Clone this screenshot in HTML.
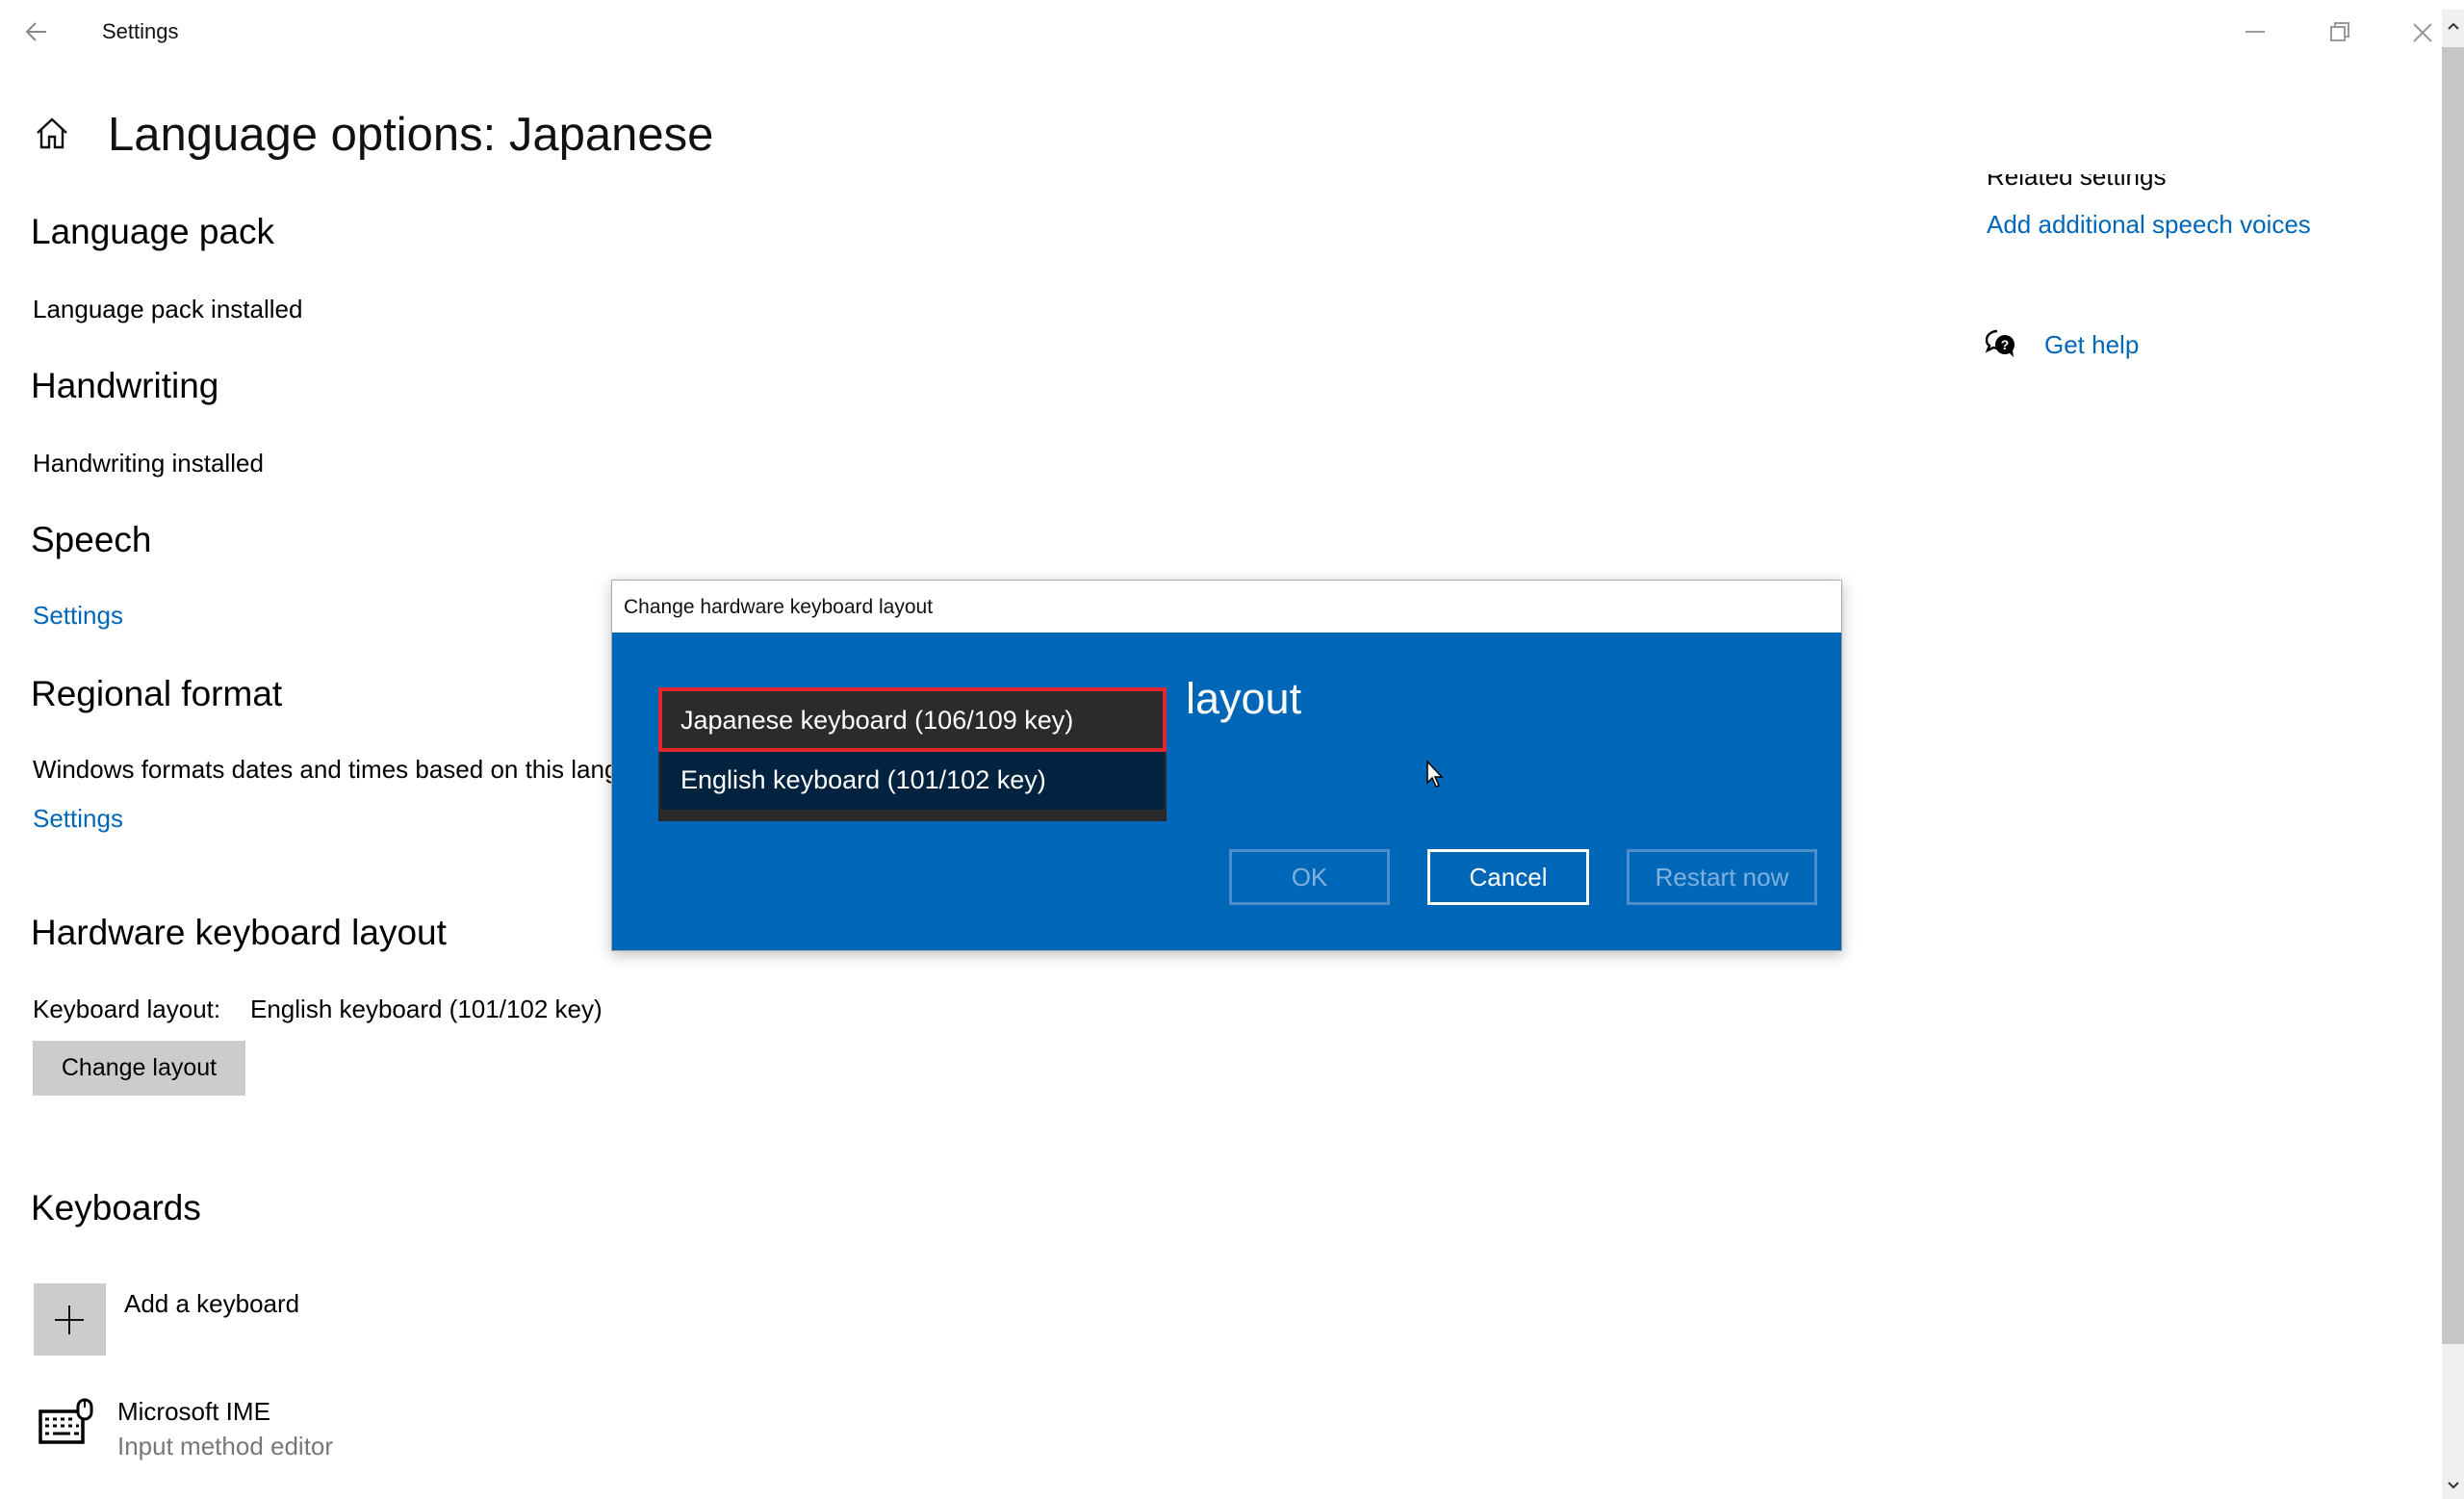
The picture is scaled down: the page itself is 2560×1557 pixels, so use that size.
<!DOCTYPE html>
<html><head><meta charset="utf-8"><style>
*{margin:0;padding:0;box-sizing:border-box}
html,body{width:2560px;height:1557px;overflow:hidden;background:#fff;font-family:"Liberation Sans",sans-serif;color:#000}
.t{position:absolute;white-space:nowrap;line-height:1}
.h{font-size:37px}
.b{font-size:26px}
.lnk{color:#0067b8}
.btn{position:absolute;border:3px solid #4d8fcc;color:#80b0dd;font-size:26px;display:flex;align-items:center;justify-content:center}
</style></head><body>

<svg style="position:absolute;left:26px;top:22px" width="24" height="22" viewBox="0 0 24 22"><path d="M22 11H3M11 2L2 11l9 9" fill="none" stroke="#888" stroke-width="2"/></svg>
<div class="t" style="left:106px;top:22px;font-size:22px;color:#111">Settings</div>
<div style="position:absolute;left:2333px;top:32px;width:20px;height:2px;background:#999"></div>
<svg style="position:absolute;left:2420px;top:22px" width="22" height="22" viewBox="0 0 22 22"><path d="M2 6h14v14H2zM6 6V2h14v14h-4" fill="none" stroke="#999" stroke-width="2"/></svg>
<svg style="position:absolute;left:2506px;top:23px" width="22" height="22" viewBox="0 0 22 22"><path d="M2 2l18 18M20 2L2 20" stroke="#999" stroke-width="2"/></svg>

<div style="position:absolute;left:2537px;top:10px;width:23px;height:1547px;background:#f0f0f0"></div>
<div style="position:absolute;left:2537px;top:49px;width:23px;height:1347px;background:#c6c6c6"></div>
<svg style="position:absolute;left:2542px;top:22px" width="14" height="10" viewBox="0 0 14 10"><path d="M2 8l5-5 5 5" fill="none" stroke="#333" stroke-width="2"/></svg>
<svg style="position:absolute;left:2542px;top:1538px" width="14" height="10" viewBox="0 0 14 10"><path d="M2 2l5 5 5-5" fill="none" stroke="#333" stroke-width="2"/></svg>

<svg style="position:absolute;left:36px;top:121px" width="36" height="34" viewBox="0 0 36 34"><path d="M3 17L18 3l15 14M7 13v19h8V21h6v11h8V13" fill="none" stroke="#111" stroke-width="2.4"/></svg>
<div class="t" style="left:112px;top:116px;font-size:49px;color:#111">Language options: Japanese</div>

<div class="t h" style="left:32px;top:222px">Language pack</div>
<div class="t b" style="left:34px;top:308px">Language pack installed</div>
<div class="t h" style="left:32px;top:382px">Handwriting</div>
<div class="t b" style="left:34px;top:468px">Handwriting installed</div>
<div class="t h" style="left:32px;top:542px">Speech</div>
<div class="t b lnk" style="left:34px;top:626px">Settings</div>
<div class="t h" style="left:32px;top:702px">Regional format</div>
<div class="t b" style="left:34px;top:786px">Windows formats dates and times based on this language</div>
<div class="t b lnk" style="left:34px;top:837px">Settings</div>
<div class="t h" style="left:32px;top:950px">Hardware keyboard layout</div>
<div class="t b" style="left:34px;top:1035px">Keyboard layout:</div>
<div class="t b" style="left:260px;top:1035px">English keyboard (101/102 key)</div>
<div style="position:absolute;left:34px;top:1081px;width:221px;height:57px;background:#ccc;font-size:25px;display:flex;align-items:center;justify-content:center">Change layout</div>
<div class="t h" style="left:32px;top:1236px">Keyboards</div>
<div style="position:absolute;left:35px;top:1333px;width:75px;height:75px;background:#ccc"></div>
<svg style="position:absolute;left:57px;top:1356px" width="30" height="30" viewBox="0 0 30 30"><path d="M15 0v30M0 15h30" stroke="#111" stroke-width="2"/></svg>
<div class="t b" style="left:129px;top:1341px">Add a keyboard</div>
<svg style="position:absolute;left:38px;top:1452px" width="62" height="50" viewBox="0 0 62 50"><path d="M4 14h44v32H4z" fill="none" stroke="#000" stroke-width="3.5"/><rect x="43" y="2" width="14" height="20" rx="7" fill="#fff" stroke="#000" stroke-width="3"/><path d="M50 3v7" stroke="#000" stroke-width="2"/><path d="M9 22h4M17 22h4M25 22h4M33 22h4M9 29h4M17 29h4M25 29h4M33 29h4M41 29h3M9 37h4M17 37h18M39 37h5" stroke="#000" stroke-width="3"/></svg>
<div class="t b" style="left:122px;top:1453px">Microsoft IME</div>
<div class="t b" style="left:122px;top:1489px;color:#777">Input method editor</div>

<div style="position:absolute;left:2064px;top:181px;width:300px;height:18px;overflow:hidden"><div class="t b" style="left:0;top:-11px">Related settings</div></div>
<div class="t b lnk" style="left:2064px;top:220px">Add additional speech voices</div>
<svg style="position:absolute;left:2063px;top:342px" width="32" height="30" viewBox="0 0 32 30"><path d="M12 2C6 2 1 6 1 11c0 3 1 5 3 6l-2 5 6-3c1 0 3 1 4 1" fill="none" stroke="#000" stroke-width="2.4"/><circle cx="20" cy="16" r="10" fill="#000"/><path d="M24 24l5 5-1-7" fill="#000"/><text x="20" y="21" font-size="14" font-weight="bold" fill="#fff" text-anchor="middle" font-family="Liberation Sans">?</text></svg>
<div class="t b lnk" style="left:2124px;top:345px">Get help</div>

<div style="position:absolute;left:635px;top:602px;width:1279px;height:386px;border:1px solid #aaa;box-shadow:0 4px 14px rgba(0,0,0,.25);background:#0067b8"></div>
<div style="position:absolute;left:636px;top:603px;width:1277px;height:54px;background:#fff"></div>
<div class="t" style="left:648px;top:620px;font-size:21px;color:#111">Change hardware keyboard layout</div>
<div class="t" style="left:1232px;top:703px;font-size:45px;color:#fff">layout</div>

<div style="position:absolute;left:684px;top:714px;width:528px;height:139px;background:#2b2b2b"></div>
<div style="position:absolute;left:684px;top:714px;width:528px;height:67px;background:#2b2b2b;border:4px solid #e3262b"></div>
<div style="position:absolute;left:686px;top:781px;width:524px;height:60px;background:#01233f"></div>
<div class="t" style="left:707px;top:735px;font-size:27px;color:#fff">Japanese keyboard (106/109 key)</div>
<div class="t" style="left:707px;top:797px;font-size:27px;color:#fff">English keyboard (101/102 key)</div>

<div class="btn" style="left:1277px;top:882px;width:167px;height:58px">OK</div>
<div class="btn" style="left:1483px;top:882px;width:168px;height:58px;border-color:#fff;color:#fff">Cancel</div>
<div class="btn" style="left:1690px;top:882px;width:198px;height:58px">Restart now</div>

<svg style="position:absolute;left:1482px;top:790px" width="20" height="30" viewBox="0 0 20 30"><path d="M1 1v22l5-5 4 9 3-1-4-9h7z" fill="#fff" stroke="#000" stroke-width="1.5"/></svg>
</body></html>
